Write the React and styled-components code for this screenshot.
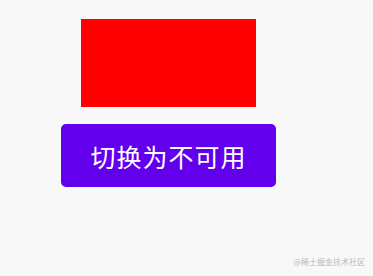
import React from 'react'
import styled, { createGlobalStyle } from 'styled-components'

const Global = createGlobalStyle`
  html, body {
    margin: 0;
    padding: 0;
    background: #f8f8f8;
  }
`

export default function App() {
  return (
    <Page>
      <Global />
      <Column>
        <RedBox />
        <ToggleButton>切换为不可用</ToggleButton>
      </Column>
      <Watermark>@稀土掘金技术社区</Watermark>
    </Page>
  )
}

const Page = styled.div`
  width: 373px;
  height: 276px;
  background: #f8f8f8;
  display: flex;
  flex-direction: column;
  justify-content: space-between;
  box-sizing: border-box;
  overflow: hidden;
`

const Column = styled.div`
  width: 337px;
  padding-top: 19px;
  display: flex;
  flex-direction: column;
  align-items: center;
  gap: 17px;
`

const RedBox = styled.div`
  width: 175px;
  height: 88px;
  background: #ff0000;
`

const ToggleButton = styled.button`
  width: 215px;
  height: 63px;
  border: none;
  border-radius: 5px;
  background: #6200ee;
  color: #ffffff;
  font-family: "Noto Sans CJK SC", sans-serif;
  font-size: 25px;
  letter-spacing: 1px;
  padding: 0;
  cursor: pointer;
`

const Watermark = styled.div`
  align-self: flex-end;
  padding: 0 8px 9px 0;
  font-family: "Noto Sans CJK SC", sans-serif;
  font-size: 8px;
  color: #b8b8b8;
`
